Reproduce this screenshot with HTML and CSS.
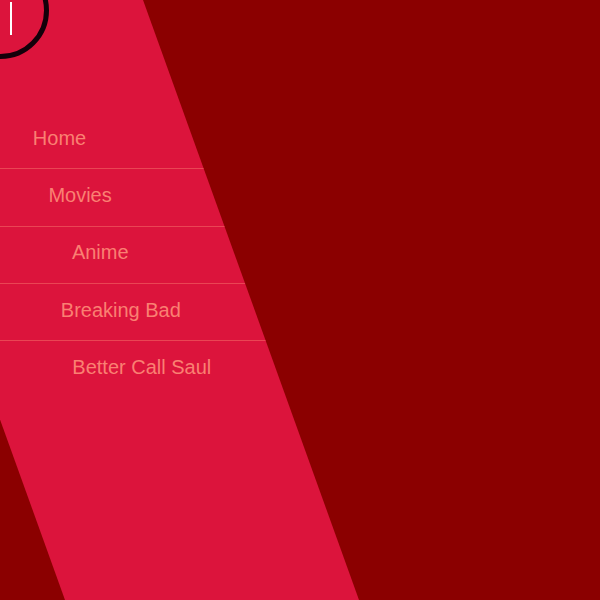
FILE: index.html
```html
<!DOCTYPE html>
<html>
<head>
<meta charset="utf-8">
<link rel="stylesheet" href="styles.css">
</head>
<body>
<div class="page">
  <nav class="band">
    <ul class="menu">
      <li class="item"><a class="link" href="#">Home</a></li>
      <li class="item"><a class="link" href="#">Movies</a></li>
      <li class="item"><a class="link" href="#">Anime</a></li>
      <li class="item"><a class="link" href="#">Breaking Bad</a></li>
      <li class="item"><a class="link" href="#">Better Call Saul</a></li>
    </ul>
  </nav>
  <button class="toggle" aria-label="menu"><span class="bar"></span></button>
</div>
</body>
</html>
```
FILE: styles.css
```css
html, body {
  margin: 0;
  padding: 0;
  width: 600px;
  height: 600px;
  overflow: hidden;
  background: #8b0000;
  font-family: "Liberation Sans", Arial, sans-serif;
}
.page {
  position: relative;
  width: 600px;
  height: 600px;
  overflow: hidden;
}
.band {
  position: absolute;
  top: 0;
  left: -151px;
  width: 294px;
  height: 620px;
  background: #dc143c;
  transform-origin: 0 0;
  transform: skewX(19.8deg);
}
.menu {
  list-style: none;
  margin: 0;
  padding: 112px 0 0 0;
}
.item {
  height: 56.33px;
  display: flex;
  align-items: center;
  justify-content: center;
  padding-left: 27px;
}
.item + .item {
  border-top: 1px solid rgba(250, 128, 114, 0.45);
}
.link {
  display: inline-block;
  transform: skewX(-19.8deg);
  color: #fa8072;
  text-decoration: none;
  font-size: 20px;
  margin-top: -4px;
}
.toggle {
  position: absolute;
  top: -38px;
  left: -48px;
  width: 97px;
  height: 97px;
  border-radius: 50%;
  border: 5px solid #14000a;
  background: transparent;
  box-sizing: border-box;
  padding: 0;
}
.bar {
  position: absolute;
  left: 53px;
  top: 35px;
  width: 2px;
  height: 33px;
  background: #ffffff;
}
```
